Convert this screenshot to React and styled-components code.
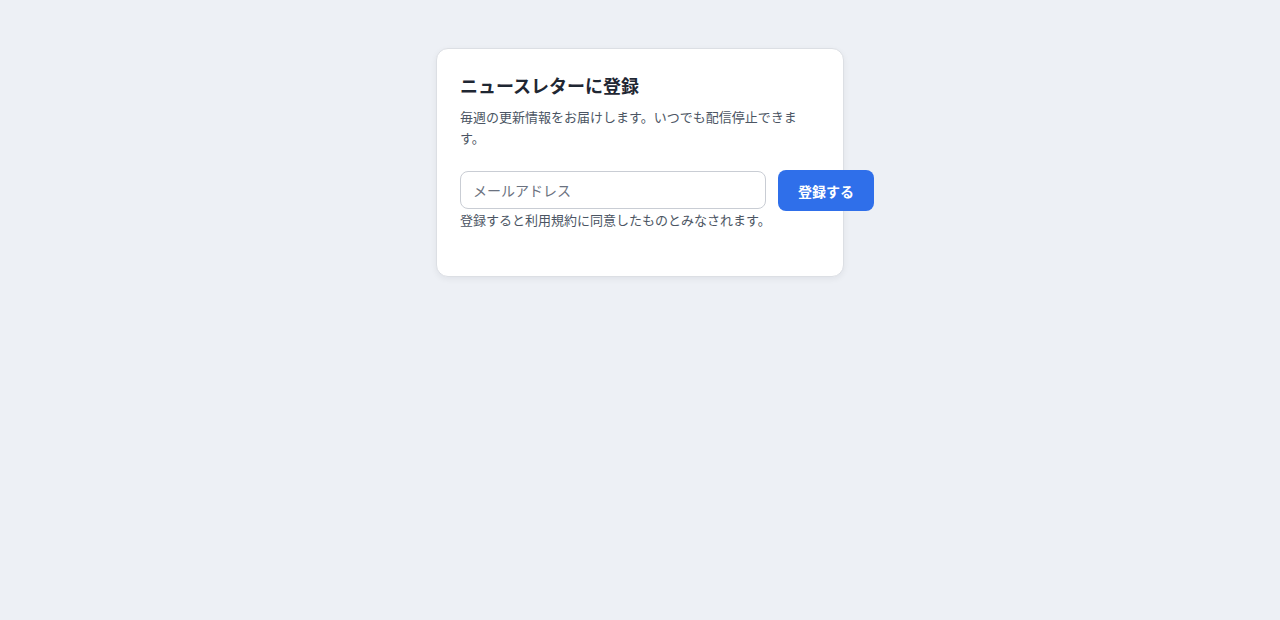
import React from 'react';
import styled, { createGlobalStyle } from 'styled-components';

const GlobalStyle = createGlobalStyle`
  html, body {
    margin: 0;
    padding: 0;
    background: #edf0f5;
    font-family: "Noto Sans CJK JP", "Noto Sans", sans-serif;
  }
`;

const Page = styled.div`
  min-height: 620px;
  display: flex;
  justify-content: center;
  align-items: flex-start;
  padding-top: 48px;
  box-sizing: border-box;
`;

const Card = styled.div`
  width: 408px;
  box-sizing: border-box;
  background: #ffffff;
  border: 1px solid #dcdfe4;
  border-radius: 12px;
  box-shadow: 0 2px 6px rgba(15, 23, 42, 0.06);
  padding: 23px 23px 47px;
`;

const Title = styled.h2`
  margin: 0 0 7px;
  font-size: 18px;
  line-height: 27px;
  font-weight: 700;
  color: #1f2733;
`;

const Description = styled.p`
  margin: 0 0 22px;
  font-size: 13px;
  line-height: 21px;
  color: #4b5563;
`;

const Row = styled.div`
  display: flex;
  align-items: flex-start;
  gap: 12px;
`;

const Field = styled.div`
  width: 306px;
  flex-shrink: 0;
  display: flex;
  flex-direction: column;
`;

const Input = styled.input`
  margin-top: 1px;
  height: 38px;
  box-sizing: border-box;
  border: 1px solid #c9cdd4;
  border-radius: 8px;
  padding: 0 12px;
  font-family: inherit;
  font-size: 14px;
  color: #1f2733;
  outline: none;
  &::placeholder {
    color: #6b7280;
  }
`;

const Hint = styled.p`
  margin: 2px 0 0;
  font-size: 13px;
  line-height: 18px;
  color: #4b5563;
  white-space: nowrap;
`;

const Button = styled.button`
  flex-shrink: 0;
  width: 96px;
  height: 41px;
  border: none;
  border-radius: 8px;
  background: #2f6fea;
  color: #ffffff;
  font-family: inherit;
  font-size: 14px;
  font-weight: 700;
  cursor: pointer;
`;

export default function App() {
  return (
    <>
      <GlobalStyle />
      <Page>
        <Card>
          <Title>ニュースレターに登録</Title>
          <Description>
            毎週の更新情報をお届けします。いつでも配信停止できます。
          </Description>
          <Row>
            <Field>
              <Input type="email" placeholder="メールアドレス" />
              <Hint>登録すると利用規約に同意したものとみなされます。</Hint>
            </Field>
            <Button>登録する</Button>
          </Row>
        </Card>
      </Page>
    </>
  );
}
